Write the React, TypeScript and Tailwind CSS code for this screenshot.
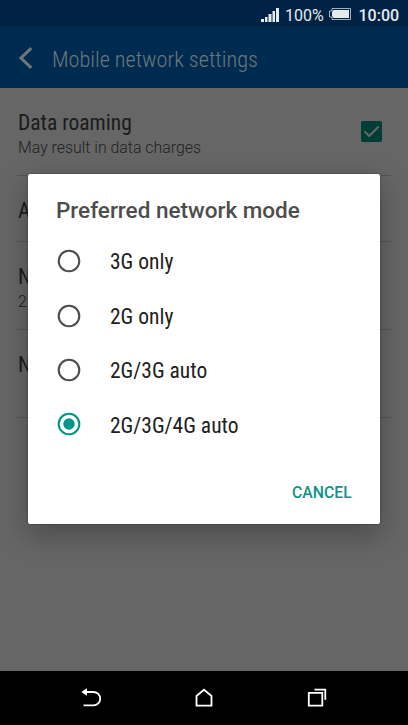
import type { ReactNode } from "react";

const condensed =
  "block whitespace-nowrap font-['Roboto_Condensed',Roboto,sans-serif] [font-stretch:75%]";

function Row({ height, children }: { height: string; children?: ReactNode }) {
  return (
    <div className={`${height} mx-[17px] border-b border-[#555] pl-px text-[#1b1b1b]`}>{children}</div>
  );
}

function Option({ label, selected = false }: { label: string; selected?: boolean }) {
  return (
    <li className="flex h-[54.4px] items-center">
      <svg width="24" height="24" viewBox="0 0 24 24" fill="none" className="mr-[29px]">
        <circle cx="12" cy="12" r="10.3" stroke={selected ? "#009688" : "#4d4d4d"} strokeWidth="2.1" />
        {selected && <circle cx="12" cy="12" r="5.7" fill="#009688" />}
      </svg>
      <span className={`${condensed} pt-[2.4px] text-[21.5px] leading-6 text-[#212121]`}>{label}</span>
    </li>
  );
}

export default function App() {
  return (
    <div className="relative flex h-[725px] w-[408px] flex-col overflow-hidden bg-[#666] font-[Roboto,sans-serif]">
      <div className="flex h-[27px] items-center bg-[#002244] pl-[261px] pt-[3px] text-[#e4ebef]">
        <svg width="18" height="14" viewBox="0 0 18 14" fill="currentColor">
          <path d="M0 11h3v3H0zM4 9h2.5v5H4zM7.5 6h3v8h-3zM11.5 3h2.5v11h-2.5zM15 0h3v14h-3z" />
        </svg>
        <span className="ml-[6px] w-[39px] pt-px text-[16px] leading-5">100%</span>
        <svg width="22" height="12" viewBox="0 0 22 12" className="mb-[2px] ml-[5px]">
          <path d="M3 .5h18.5v11H3V9H.5V3H3z" fill="none" stroke="currentColor" strokeOpacity=".7" strokeWidth="1" />
          <path d="M4.5 2h15.5v8H4.5L3 8V4z" fill="currentColor" />
        </svg>
        <span className="ml-[7.5px] pt-px text-[16px] font-medium leading-5">10:00</span>
      </div>
      <header className="flex h-[61px] items-center bg-[#002b50] pl-[19px] text-[#6b777d]">
        <svg width="14" height="22" viewBox="0 0 14 22" fill="none" stroke="currentColor" strokeWidth="3">
          <path d="M12.3 1.2 2 11l10.3 9.8" />
        </svg>
        <h1 className={`${condensed} ml-[19px] pt-[2px] text-[22.2px] font-[350] leading-6`}>Mobile network settings</h1>
      </header>
      <main className="flex-1">
        <Row height="h-[88px]">
          <div className="flex justify-between pt-[22px]">
            <div>
              <div className={`${condensed} text-[21.5px] leading-[26px]`}>Data roaming</div>
              <div className="whitespace-nowrap text-[15.9px] font-light leading-6 text-[#222]">May result in data charges</div>
            </div>
            <svg width="21" height="21" viewBox="0 0 21 21" className="mr-[9px] mt-[11px]">
              <rect width="21" height="21" rx="2" fill="#003d36" />
              <path d="m3.5 10.3 4.7 4.7 9.5-9.5" fill="none" stroke="#666" strokeWidth="2" />
            </svg>
          </div>
        </Row>
        <Row height="h-[66px]">
          <div className={`${condensed} pt-[22px] text-[21.5px] leading-[26px]`}>A</div>
        </Row>
        <Row height="h-[88px]">
          <div className={`${condensed} pt-[22px] text-[21.5px] leading-[26px]`}>N</div>
          <div className="text-[16px] font-light leading-6">2G</div>
        </Row>
        <Row height="h-[88px]">
          <div className={`${condensed} pt-[22px] text-[21.5px] leading-[26px]`}>N</div>
        </Row>
      </main>
      <nav className="flex h-[54px] items-center bg-black pl-[81px] text-white">
        <svg width="21" height="20" viewBox="0 0 21 20" fill="none" stroke="currentColor" strokeWidth="1.8">
          <path d="M5 4h7.5a6.7 6.7 0 0 1 0 13.4H2.5" />
          <path d="M.3 4 6 .3v7.4z" fill="currentColor" stroke="none" />
        </svg>
        <svg width="18" height="20" viewBox="0 0 18 20" fill="none" stroke="currentColor" strokeWidth="1.8" className="ml-[93px]">
          <path d="M1.5 17.6V8L9 1.7 16.5 8v9.6z" />
        </svg>
        <svg width="20" height="20" viewBox="0 0 20 20" fill="none" stroke="currentColor" strokeWidth="1.8" className="ml-[94px]">
          <path d="M1.8 4.9h13.5v12.7H1.8zM7.5 1.7h10.8v10" />
        </svg>
      </nav>
      <section
        role="dialog"
        className="absolute left-[28px] top-[174px] h-[350px] w-[352px] rounded-[2px] bg-white pl-[28px] pt-[22px] shadow-[0_10px_28px_2px_rgba(0,0,0,0.26),0_0_2px_rgba(0,0,0,0.4)]"
      >
        <h2 className="whitespace-nowrap text-[22.5px] font-medium leading-7 text-[#4d4d4d]">Preferred network mode</h2>
        <ul className="mt-[10px] pl-px">
          <Option label="3G only" />
          <Option label="2G only" />
          <Option label="2G/3G auto" />
          <Option label="2G/3G/4G auto" selected />
        </ul>
        <button className="ml-[236px] mt-[31px] block text-[15.8px] font-medium leading-5 text-[#109488]">CANCEL</button>
      </section>
    </div>
  );
}
